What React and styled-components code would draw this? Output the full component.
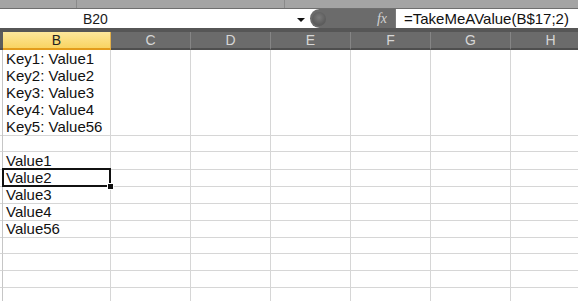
import styled, { createGlobalStyle } from "styled-components";

const GlobalStyle = createGlobalStyle`
  html, body {
    margin: 0;
    padding: 0;
    background: #ffffff;
    overflow: hidden;
  }
  * { box-sizing: border-box; }
`;

const columns = ["B", "C", "D", "E", "F", "G", "H"];
const colTemplate = "3px 108px repeat(5, 80px) 80px 1fr";

const Page = styled.div`
  width: 578px;
  height: 301px;
  overflow: hidden;
  font-family: "Liberation Sans", Arial, sans-serif;
`;

const Ribbon = styled.div`
  height: 9px;
  background: #a4a4a4;
  border-bottom: 1px solid #6f6f6f;
  display: flex;
`;

const RibbonGroup = styled.div`
  width: ${(p) => p.w}px;
  border-right: 1px solid #8a8a8a;
`;

const FormulaBar = styled.div`
  height: 19px;
  display: flex;
  background: #ffffff;
`;

const NameBox = styled.div`
  width: 310px;
  position: relative;
  display: flex;
  align-items: center;
  padding-left: 83px;
  font-size: 14px;
  color: #1a1a1a;
`;

const DropArrow = styled.span`
  position: absolute;
  left: 297px;
  top: 9px;
  width: 0;
  height: 0;
  border-left: 4px solid transparent;
  border-right: 4px solid transparent;
  border-top: 4px solid #111;
`;

const FxArea = styled.div`
  width: 85px;
  background: #6b6b6b;
  border-radius: 10px 0 0 10px;
  display: flex;
  align-items: center;
  justify-content: space-between;
  padding: 0 8px 0 2px;
`;

const Knob = styled.span`
  width: 14px;
  height: 14px;
  border-radius: 50%;
  background: radial-gradient(circle at 50% 40%, #7a7a7a 0%, #5e5e5e 60%, #545454 100%);
`;

const FxLabel = styled.span`
  font-family: "Liberation Serif", "Times New Roman", serif;
  font-style: italic;
  font-size: 14px;
  color: #d2d2d2;
`;

const FormulaInput = styled.div`
  flex: 1;
  display: flex;
  align-items: center;
  padding-left: 8px;
  font-size: 15px;
  color: #111;
  border-left: 1px solid #7a7a7a;
`;

const Gap = styled.div`
  height: 4px;
  background: #565656;
`;

const HeaderRow = styled.div`
  display: grid;
  grid-template-columns: ${colTemplate};
  height: 18px;
  background: #6b6b6b;
`;

const HeaderCell = styled.div`
  display: flex;
  align-items: center;
  justify-content: center;
  font-size: 14px;
  color: ${(p) => (p.active ? "#222" : "#d6d6d6")};
  background: ${(p) =>
    p.active ? "linear-gradient(#fde79b, #f9d462)" : "transparent"};
  border-right: 1px solid ${(p) => (p.active ? "#e2b04a" : "#858585")};
  border-bottom: 2px solid ${(p) => (p.active ? "#e39c1c" : "#4e4e4e")};
`;

const Corner = styled.div`
  background: #5c5c5c;
  border-bottom: 2px solid #4e4e4e;
`;

const Row = styled.div`
  display: grid;
  grid-template-columns: ${colTemplate};
  height: ${(p) => p.h || 17}px;
`;

const RowHead = styled.div`
  border-right: 1px solid #c6c6c6;
  border-bottom: 1px solid #d6d6d6;
`;

const Cell = styled.div`
  position: relative;
  z-index: ${(p) => (p.selected ? 2 : "auto")};
  border-right: 1px solid #d6d6d6;
  border-bottom: 1px solid #d6d6d6;
  padding: 0 3px;
  font-size: 15px;
  line-height: 17px;
  color: #111;
  white-space: pre;
`;

const Selection = styled.div`
  position: absolute;
  left: -1px;
  top: -1px;
  right: -1px;
  bottom: -1px;
  border: 2px solid #111;
  pointer-events: none;
`;

const FillHandle = styled.span`
  position: absolute;
  right: -4px;
  bottom: -4px;
  width: 5px;
  height: 5px;
  background: #111;
  outline: 1px solid #fff;
`;

const rows = [
  { h: 85, text: "Key1: Value1\nKey2: Value2\nKey3: Value3\nKey4: Value4\nKey5: Value56" },
  { text: "" },
  { text: "Value1" },
  { text: "Value2", selected: true },
  { text: "Value3" },
  { text: "Value4" },
  { text: "Value56" },
  { text: "" },
  { text: "" },
  { text: "" },
  { text: "" },
];

export default function App() {
  return (
    <Page>
      <GlobalStyle />
      <Ribbon>
        <RibbonGroup w={77} />
        <RibbonGroup w={208} />
      </Ribbon>
      <FormulaBar>
        <NameBox>
          B20
          <DropArrow />
        </NameBox>
        <FxArea>
          <Knob />
          <FxLabel>fx</FxLabel>
        </FxArea>
        <FormulaInput>=TakeMeAValue(B$17;2)</FormulaInput>
      </FormulaBar>
      <Gap />
      <HeaderRow>
        <Corner />
        {columns.map((c) => (
          <HeaderCell key={c} active={c === "B"}>
            {c}
          </HeaderCell>
        ))}
        <HeaderCell />
      </HeaderRow>
      {rows.map((r, i) => (
        <Row key={i} h={r.h}>
          <RowHead />
          <Cell selected={r.selected}>
            {r.text}
            {r.selected && (
              <Selection>
                <FillHandle />
              </Selection>
            )}
          </Cell>
          {columns.slice(1).map((c) => (
            <Cell key={c} />
          ))}
          <Cell />
        </Row>
      ))}
    </Page>
  );
}
